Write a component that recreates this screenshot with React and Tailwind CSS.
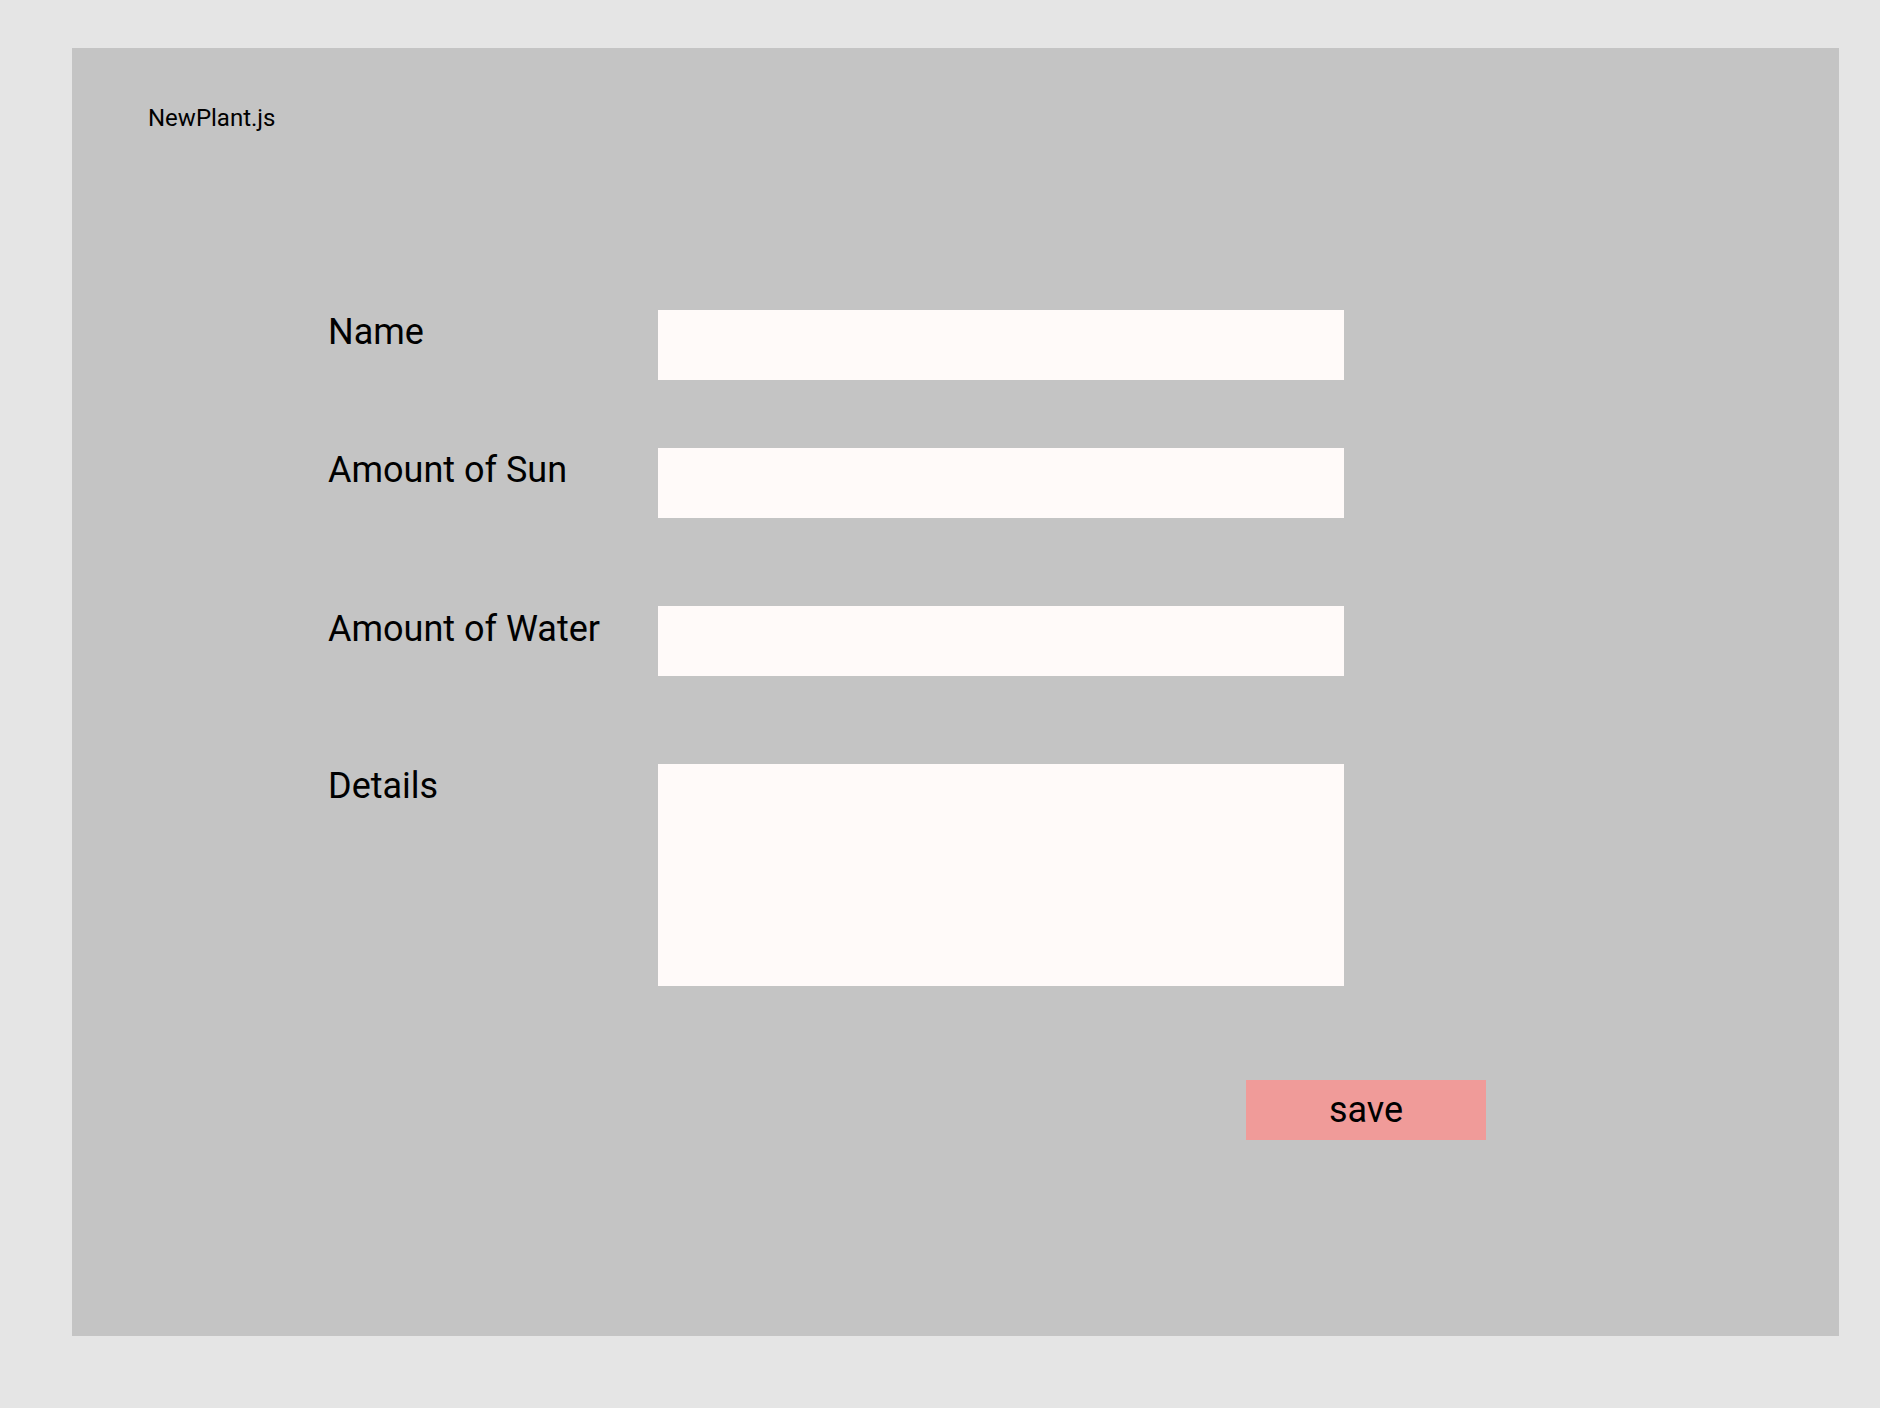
export default function App() {
  const font = { fontFamily: 'Roboto, "Noto Sans", sans-serif' };
  return (
    <div className="min-h-[1408px] w-[1880px] bg-[#e5e5e5] pt-[48px] pl-[72px]" style={font}>
      <div className="w-[1767px] h-[1288px] bg-[#c4c4c4] flex flex-col">
        <div className="pt-[56px] pl-[76px] text-[24px] leading-[28px] text-black">NewPlant.js</div>
        <form className="ml-[256px] mt-[178px] flex flex-col" onSubmit={(e) => e.preventDefault()}>
          <div className="flex">
            <label className="w-[330px] pt-[4px] text-[36px] leading-[36px] text-black">Name</label>
            <input className="w-[686px] h-[70px] bg-[#fffaf9] outline-none border-0" />
          </div>
          <div className="flex mt-[68px]">
            <label className="w-[330px] pt-[4px] text-[36px] leading-[36px] text-black">Amount of Sun</label>
            <input className="w-[686px] h-[70px] bg-[#fffaf9] outline-none border-0" />
          </div>
          <div className="flex mt-[88px]">
            <label className="w-[330px] pt-[5px] text-[36px] leading-[36px] text-black">Amount of Water</label>
            <input className="w-[686px] h-[70px] bg-[#fffaf9] outline-none border-0" />
          </div>
          <div className="flex mt-[88px]">
            <label className="w-[330px] pt-[4px] text-[36px] leading-[36px] text-black">Details</label>
            <textarea className="w-[686px] h-[222px] bg-[#fffaf9] outline-none border-0 resize-none" />
          </div>
          <div className="flex mt-[94px]">
            <button type="submit" className="ml-[918px] w-[240px] h-[60px] bg-[#f09b99] text-[36px] leading-[36px] text-black flex items-center justify-center">
              save
            </button>
          </div>
        </form>
      </div>
    </div>
  );
}
